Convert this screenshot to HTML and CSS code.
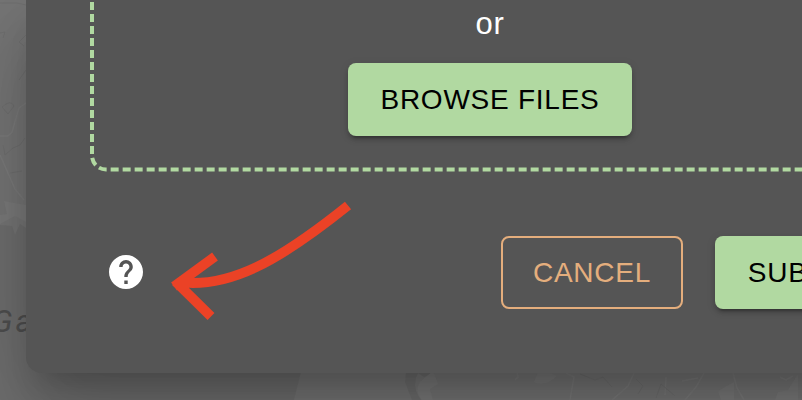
FILE: index.html
```
<!DOCTYPE html>
<html lang="en">
<head>
<meta charset="utf-8">
<title>Upload files</title>
<link rel="stylesheet" href="styles.css">
</head>
<body>
<svg class="map" viewBox="0 0 802 400" aria-hidden="true">
  <path class="land" d="M0 0H26V228L20 224L15 235L12 226L0 225Z"/>
  <path class="land" d="M301 372H406L405 382L412 400H294Z"/>
  <path class="land" d="M436 372H802V400H421Q411 386 418 373L424 377Z"/>
  <path class="relief" d="M4 201L26 205V222L15 216L0 224V215L7 214Z"/>
  <path class="relief" d="M420 382L433 371L438 384L430 389L433 400H422Q414 391 420 382ZM534 382Q545 387 557 376L548 372H538ZM718 391L734 382V400H721ZM778 392L788 390L798 374V400H775Z"/>
  <path class="road" d="M0 136H8L12 132L19 108L26 103M0 155L15 189L24 200M566 373L574 377L570 400M634 373L628 386L612 400M704 373L696 387L685 400M733 373L737 388L744 400M666 377L665 395M517 372L518 377L515 380M682 381L698 378M780 377L786 380L793 376"/>
  <path class="river" d="M0 3H17L26 5M0 33L5 32L3 38M26 35L19 42L24 46M26 70L19 80M3 145L5 155L13 148L20 145L25 138M10 173L22 171M2 107Q11 99 14 106L8 114ZM580 374L595 380L603 377L612 387M636 379L643 386L638 394M656 398L661 384L675 396"/>
  <text class="place" x="-8" y="332">Ga</text>
</svg>
<main class="dialog">
  <section class="dropzone">
    <svg class="outline" viewBox="0 0 712 172" aria-hidden="true"><path d="M2 2V155.5A14 14 0 0 0 16 169.5H712"/></svg>
    <p class="or">or</p>
    <button class="button filled browse">BROWSE FILES</button>
  </section>
  <footer class="actions">
    <svg class="help" viewBox="2 2 20 20" role="img" aria-label="Help"><path d="M12 2C6.48 2 2 6.48 2 12s4.480 10 10 10 10-4.480 10-10S17.520 2 12 2zm1 17h-2v-2h2v2zm2.070-7.750-.9.920C13.450 12.900 13 13.500 13 15h-2v-.5c0-1.100.450-2.100 1.170-2.830l1.240-1.260c.370-.360.590-.860.590-1.410 0-1.100-.9-2-2-2s-2 .9-2 2H8c0-2.210 1.790-4 4-4s4 1.790 4 4c0 .880-.360 1.680-.930 2.250z"/></svg>
    <button class="button outlined">CANCEL</button>
    <button class="button filled submit">SUBMIT</button>
  </footer>
</main>
<svg class="arrow" viewBox="160 190 200 140" aria-hidden="true">
  <path d="M348 205.500C279 261 229 289 178 282M215 256.500L174 286.500M211 316.500L175.500 281.500"/>
</svg>
</body>
</html>
```
FILE: styles.css
```
* { box-sizing: border-box; }

body {
  margin: 0;
  width: 802px;
  height: 400px;
  overflow: hidden;
  position: relative;
  background: #707070;
  font-family: "Liberation Sans", Arial, sans-serif;
}

.map {
  position: absolute;
  inset: 0;
  width: 802px;
  height: 400px;
  fill: none;
}
.land { fill: #777; }
.relief { fill: #7c7c7c; }
.road { stroke: #7d7d7d; stroke-width: 1.5; }
.river { stroke: #717171; }
.place {
  fill: #505050;
  font: italic 31px Roboto, sans-serif;
  letter-spacing: 3px;
}

.dialog {
  position: relative;
  width: 1000px;
  height: 372.5px;
  margin-left: 26px;
  padding-left: 64px;
  border-radius: 0 0 16px 16px;
  background: #555;
  box-shadow:
    0 22px 30px -14px rgba(0, 0, 0, .2),
    0 48px 76px 6px rgba(0, 0, 0, .14),
    0 18px 92px 16px rgba(0, 0, 0, .12);
}

.dropzone {
  position: relative;
  width: 800px;
  height: 172px;
  display: flex;
  flex-direction: column;
  align-items: center;
}
.outline {
  position: absolute;
  left: 0;
  top: 0;
  width: 712px;
  height: 172px;
  fill: none;
  stroke: #b1d9a1;
  stroke-width: 4;
  stroke-dasharray: 8 4;
}
.or {
  margin: 7px 0 22.5px;
  color: #fff;
  font-size: 31px;
  line-height: 33px;
  letter-spacing: .6px;
}

.button {
  height: 73px;
  flex: none;
  padding: 1px 0 0;
  border: 0;
  border-radius: 8px;
  font: 28px "Liberation Sans", Arial, sans-serif;
  letter-spacing: .75px;
}
.filled {
  color: #000;
  background: #b1d9a1;
  box-shadow:
    0 6px 2px -4px rgba(0, 0, 0, .2),
    0 4px 4px rgba(0, 0, 0, .14),
    0 2px 10px rgba(0, 0, 0, .12);
}
.browse { width: 284px; }
.outlined {
  width: 182px;
  margin-left: 358px;
  color: #e4ae7d;
  background: transparent;
  border: 2px solid #e4ae7d;
}
.submit { width: 176px; margin-left: 32px; }

.actions {
  display: flex;
  align-items: center;
  height: 73px;
  margin-top: 63.5px;
  padding-left: 19px;
}
.help { width: 34px; height: 34px; flex: none; fill: #fff; }

.arrow {
  position: absolute;
  left: 160px;
  top: 190px;
  width: 200px;
  height: 140px;
  fill: none;
  stroke: #eb4226;
  stroke-width: 9.8;
}
```
